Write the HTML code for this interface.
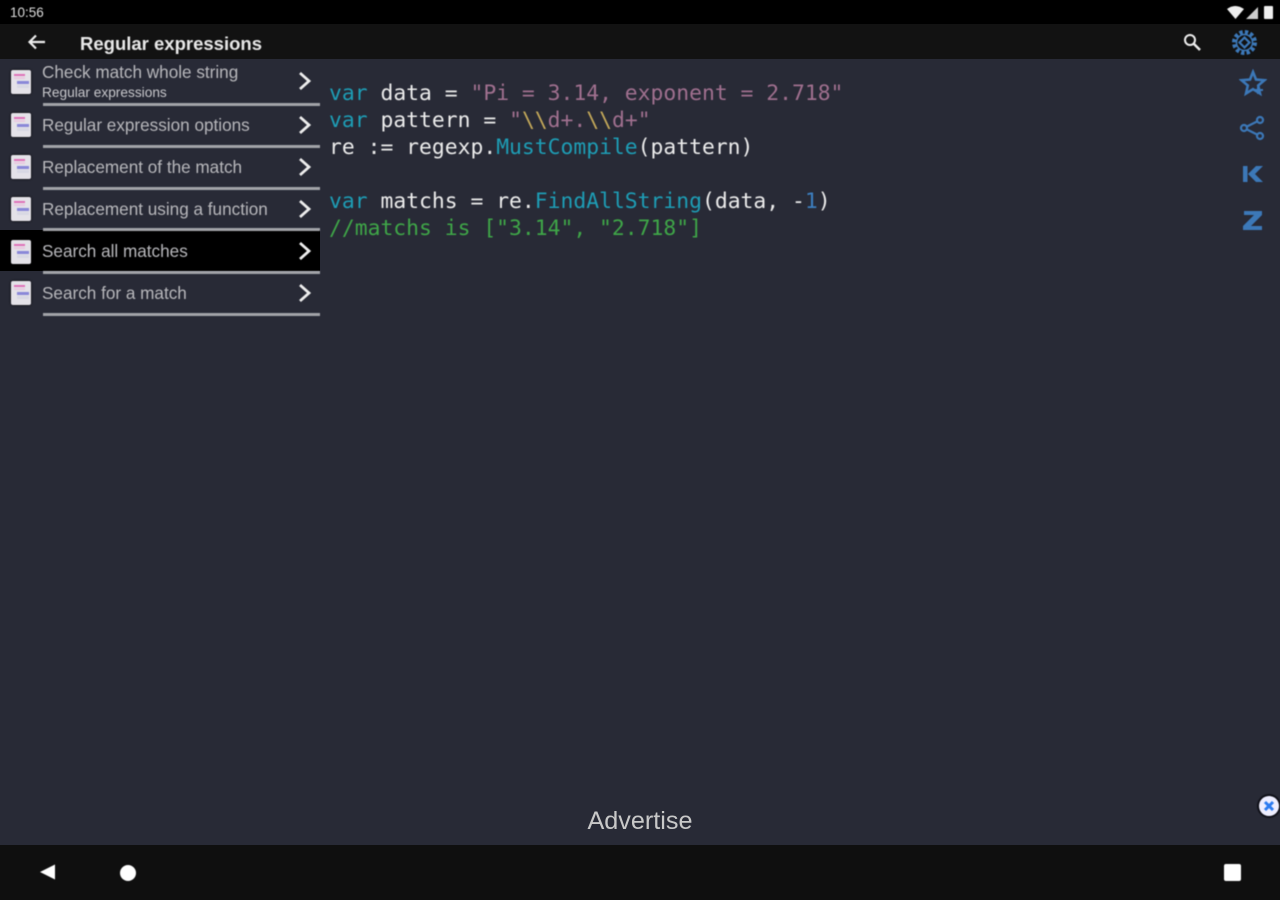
<!DOCTYPE html>
<html><head><meta charset="utf-8"><style>
html,body{margin:0;padding:0;background:#282a36}
#p{position:relative;width:1280px;height:900px;overflow:hidden;background:#282a36;font-family:"Liberation Sans",sans-serif}
#p div,#p svg{position:absolute}
.t{white-space:nowrap;color:#b8b8bc;font-size:17.15px;line-height:20px;left:42px;filter:blur(.5px)}
.l{left:43px;width:277px;height:3px;background:#a2a3a8;filter:blur(.4px)}
.c{left:329px;font:21.37px/27px "DejaVu Sans Mono",monospace;white-space:pre;color:#ececec;filter:blur(.5px)}
.k{color:#1e9db5}.s{color:#a0708f}.f{color:#1e9db5}.y{color:#c4a95a}.n{color:#3d7fc0}
.ic{left:11px;width:20px;height:24px;background:#e4e2e8;border-radius:2px;box-shadow:0 0 2px #000;filter:blur(.5px)}
.ic:before{content:"";position:absolute;left:3px;top:4px;width:11px;height:2px;background:#e070b8;box-shadow:0 3px 0 #e8c8e0}
.ic:after{content:"";position:absolute;left:6px;top:11px;width:12px;height:3px;background:#8a88d8;box-shadow:0 4px 0 #d8d8e4}
.b{filter:blur(.5px)}
</style></head><body><div id="p">
<div style="left:0;top:0;width:1280px;height:24px;background:#000"></div>
<div style="left:0;top:24px;width:1280px;height:35px;background:#121212"></div>
<div style="left:0;top:845px;width:1280px;height:55px;background:#0f0f0f"></div>
<div style="left:0;top:230px;width:320px;height:41px;background:#000"></div>

<div class="t" style="left:10px;top:4px;font-size:13.5px;line-height:18px;color:#ddd">10:56</div>
<svg class="b" style="left:1226px;top:4px" width="50" height="17" viewBox="0 0 50 17"><path d="M1 5Q9-1 18 5L9.500 15Z" fill="#eee"/><path d="M20 15L32 3V15Z" fill="#ccc"/><rect x="38" y="2" width="9" height="13" rx="1" fill="#eee"/></svg>

<svg class="b" style="left:26px;top:32px" width="22" height="20" viewBox="0 0 22 20"><path d="M19 10H4M10 3.500L3.500 10L10 16.500" fill="none" stroke="#eee" stroke-width="2.200"/></svg>
<div class="t" style="left:80px;top:32px;font-size:18.5px;line-height:23px;font-weight:bold;color:#e8e8e8">Regular expressions</div>
<svg class="b" style="left:1181px;top:31px" width="22" height="22" viewBox="0 0 22 22"><circle cx="9" cy="9" r="5" fill="none" stroke="#eee" stroke-width="2"/><path d="M12.500 12.500L19 19" stroke="#eee" stroke-width="2.500"/></svg>

<svg class="b" style="left:1230px;top:28px" width="29" height="29" viewBox="0 0 29 29" fill="none" stroke="#3c78b8"><circle cx="14.500" cy="14.500" r="10.500" stroke-width="4" stroke-dasharray="3.300 2.200"/><circle cx="14.500" cy="14.500" r="8" stroke-width="1.500"/><path d="M14.500 9.500l5 5-5 5-5-5z" stroke-width="2.200"/></svg>
<svg class="b" style="left:1239px;top:69px" width="28" height="28" viewBox="0 0 28 28" fill="none" stroke="#3c78b8" stroke-width="2.600"><path d="M14 3l3 7.500 8.500.7-6.300 5.300 1.800 8L14 20.200 7 24.500l1.800-8-6.300-5.300 8.500-.7z"/><path d="M19 17v8M15 21h9" stroke-width="2"/></svg>
<svg class="b" style="left:1239px;top:115px" width="26" height="26" viewBox="0 0 26 26" fill="none" stroke="#3c78b8" stroke-width="2.200"><circle cx="5" cy="13" r="3"/><circle cx="21" cy="5" r="3"/><circle cx="21" cy="21" r="3"/><path d="M8 11.500L18 6.500M8 14.500L18 19.500"/></svg>
<svg class="b" style="left:1241px;top:164px" width="24" height="20" viewBox="0 0 24 20" fill="#3c78b8"><path d="M2 2h4.500v16H2zM7 10L15 2h7l-8 8 8 8h-7z"/></svg>
<svg class="b" style="left:1242px;top:210px" width="22" height="22" viewBox="0 0 22 22" fill="#3c78b8"><path d="M2 1h18v4L9 16h11v4H1v-4L12 5H2z"/></svg>

<div class="ic" style="top:70px"></div>
<div class="ic" style="top:113px"></div>
<div class="ic" style="top:155px"></div>
<div class="ic" style="top:197px"></div>
<div class="ic" style="top:240px"></div>
<div class="ic" style="top:281px"></div>

<div class="t" style="top:62px">Check match whole string</div>
<div class="t" style="top:84px;font-size:13.7px;line-height:17px;color:#c8c8cc">Regular expressions</div>
<div class="t" style="top:115px">Regular expression options</div>
<div class="t" style="top:157px">Replacement of the match</div>
<div class="t" style="top:199px">Replacement using a function</div>
<div class="t" style="top:241px">Search all matches</div>
<div class="t" style="top:283px">Search for a match</div>

<div class="l" style="top:103px"></div>
<div class="l" style="top:145px"></div>
<div class="l" style="top:187px"></div>
<div class="l" style="top:228px"></div>
<div class="l" style="top:271px"></div>
<div class="l" style="top:313px"></div>

<svg class="b" style="left:297px;top:71px" width="16" height="20" viewBox="0 0 16 20"><path d="M3 2l9 8-9 8" fill="none" stroke="#eee" stroke-width="2.800"/></svg>
<svg class="b" style="left:297px;top:115px" width="16" height="20" viewBox="0 0 16 20"><path d="M3 2l9 8-9 8" fill="none" stroke="#eee" stroke-width="2.800"/></svg>
<svg class="b" style="left:297px;top:157px" width="16" height="20" viewBox="0 0 16 20"><path d="M3 2l9 8-9 8" fill="none" stroke="#eee" stroke-width="2.800"/></svg>
<svg class="b" style="left:297px;top:199px" width="16" height="20" viewBox="0 0 16 20"><path d="M3 2l9 8-9 8" fill="none" stroke="#eee" stroke-width="2.800"/></svg>
<svg class="b" style="left:297px;top:241px" width="16" height="20" viewBox="0 0 16 20"><path d="M3 2l9 8-9 8" fill="none" stroke="#eee" stroke-width="2.800"/></svg>
<svg class="b" style="left:297px;top:283px" width="16" height="20" viewBox="0 0 16 20"><path d="M3 2l9 8-9 8" fill="none" stroke="#eee" stroke-width="2.800"/></svg>

<div class="c" style="top:80px"><span class="k">var</span> data = <span class="s">"Pi = 3.14, exponent = 2.718"</span></div>
<div class="c" style="top:107px"><span class="k">var</span> pattern = <span class="s">"<span class="y">\\</span>d+.<span class="y">\\</span>d+"</span></div>
<div class="c" style="top:134px">re := regexp.<span class="f">MustCompile</span>(pattern)</div>
<div class="c" style="top:188px"><span class="k">var</span> matchs = re.<span class="f">FindAllString</span>(data, -<span class="n">1</span>)</div>
<div class="c" style="top:215px;color:#3fa648">//matchs is ["3.14", "2.718"]</div>

<div style="left:0;width:1280px;top:807px;text-align:center;font-size:25.2px;line-height:28px;color:#c8c8c8">Advertise</div>
<svg class="b" style="left:1255px;top:792px" width="25" height="28" viewBox="0 0 25 28"><circle cx="14" cy="14" r="12" fill="#0f1018"/><circle cx="14" cy="14" r="10" fill="#eef"/><path d="M10 10l8 8M18 10l-8 8" stroke="#2b7bf0" stroke-width="3"/></svg>

<svg class="b" style="left:39px;top:863px" width="18" height="18" viewBox="0 0 18 18"><path d="M1 9L16 1.500V16.500Z" fill="#fff"/></svg>
<div class="b" style="left:120px;top:865px;width:16px;height:16px;border-radius:50%;background:#fff"></div>
<div class="b" style="left:1224px;top:864px;width:17px;height:17px;border-radius:2px;background:#fff"></div>
</div></body></html>
